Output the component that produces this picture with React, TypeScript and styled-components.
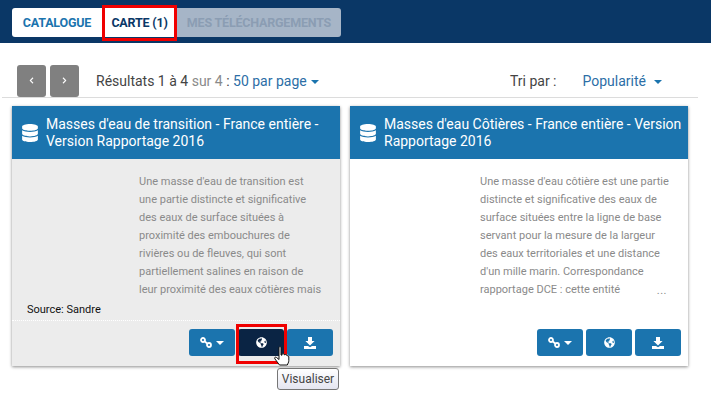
import React from 'react';
import styled, { createGlobalStyle } from 'styled-components';
import { FaDatabase, FaGlobeAmericas, FaChevronLeft, FaChevronRight } from 'react-icons/fa';

const GlobalStyle = createGlobalStyle`
    html, body {
        margin: 0;
        padding: 0;
        background: #fff;
        font-family: Roboto, "Liberation Sans", sans-serif;
    }
`;

const Page = styled.div`
    position: relative;
    width: 711px;
    height: 403px;
    overflow: hidden;
`;

const TopBar = styled.div`
    display: flex;
    align-items: flex-start;
    height: 43px;
    padding: 8px 0 0 12px;
    box-sizing: border-box;
    background: #0a3766;
`;

const Tab = styled.div<{ $state: 'active' | 'selected' | 'disabled'; $width: number; $first?: boolean; $last?: boolean }>`
    position: relative;
    width: ${p => p.$width}px;
    height: 29px;
    line-height: 29px;
    text-align: center;
    font-size: 12.5px;
    font-weight: 700;
    letter-spacing: -0.2px;
    background: ${p => (p.$state === 'disabled' ? '#a6b5c7' : '#fff')};
    color: ${p => (p.$state === 'active' ? '#1b74ae' : p.$state === 'selected' ? '#0a3766' : '#8b9db3')};
    border-radius: ${p => (p.$first ? '3px 0 0 3px' : p.$last ? '0 3px 3px 0' : '0')};
`;

const RedFrame = styled.div<{ $top: number; $left: number; $right: number; $bottom: number }>`
    position: absolute;
    top: ${p => p.$top}px;
    left: ${p => p.$left}px;
    right: ${p => p.$right}px;
    bottom: ${p => p.$bottom}px;
    border: 3px solid #f00000;
    pointer-events: none;
`;

const Toolbar = styled.div`
    display: flex;
    align-items: center;
    height: 33px;
    margin: 21px 13px 0 2px;
    padding: 0 0 0 15px;
    border-bottom: 1px solid #dcdcdc;
    font-size: 14px;
    color: #444;
`;

const PagerButton = styled.div`
    display: flex;
    align-items: center;
    justify-content: center;
    width: 29px;
    height: 32px;
    margin-right: 4px;
    border-radius: 3px;
    background: #808080;
    color: #fff;
    font-size: 7px;
`;

const Results = styled.div`
    margin-left: 13px;
    white-space: pre;
`;

const Muted = styled.span`
    color: #8a8a8a;
`;

const LinkText = styled.span`
    color: #2c6ea6;
`;

const Caret = styled.span<{ $gap: number }>`
    display: inline-block;
    margin-left: ${p => p.$gap}px;
    vertical-align: 2px;
    border-top: 4px solid #1b74ae;
    border-left: 4px solid transparent;
    border-right: 4px solid transparent;
`;

const SortLabel = styled.div`
    margin-left: auto;
`;

const SortValue = styled.div`
    margin: 0 36px 0 26px;
`;

const Cards = styled.div`
    display: flex;
    gap: 10px;
    margin: 8px 0 0 12px;
`;

const Card = styled.div<{ $hover?: boolean; $width: number }>`
    display: flex;
    flex-direction: column;
    width: ${p => p.$width}px;
    height: 260px;
    background: ${p => (p.$hover ? '#ececec' : '#fff')};
    box-shadow: 0 1px 3px rgba(0, 0, 0, 0.45);
`;

const CardHeader = styled.div`
    display: flex;
    align-items: center;
    height: 53px;
    padding-left: 9px;
    box-sizing: border-box;
    background: #1b74ae;
    color: #fff;
`;

const HeaderIcon = styled.div`
    display: flex;
    flex: none;
    width: 25px;
    font-size: 18px;
`;

const CardTitle = styled.div`
    font-size: 14px;
    line-height: 17px;
`;

const CardBody = styled.div<{ $indent: number }>`
    position: relative;
    height: 161px;
    padding: 14px 0 0 ${p => p.$indent}px;
    box-sizing: border-box;
    font-size: 11px;
    line-height: 18px;
    color: #8a8a8a;
`;

const BodyLine = styled.div`
    white-space: nowrap;
`;

const Ellipsis = styled.span`
    position: absolute;
    right: 21px;
    bottom: 20px;
    letter-spacing: 0.5px;
`;

const Source = styled.div`
    position: absolute;
    left: 15px;
    bottom: 2px;
    color: #111;
    font-size: 11px;
    line-height: 16px;
`;

const CardActions = styled.div<{ $dotted?: boolean }>`
    display: flex;
    justify-content: flex-end;
    gap: 3px;
    height: 46px;
    padding: 8px 7px 0 0;
    box-sizing: border-box;
    border-top: 1px dotted ${p => (p.$dotted ? '#fff' : 'transparent')};
`;

const ActionButton = styled.div<{ $dark?: boolean }>`
    position: relative;
    display: flex;
    align-items: center;
    justify-content: center;
    gap: 4px;
    width: 46px;
    height: 27px;
    border-radius: 3px;
    background: ${p => (p.$dark ? '#0a2444' : '#1b74ae')};
    color: #fff;
    font-size: 11px;
`;

const Tooltip = styled.div`
    position: absolute;
    left: 277px;
    top: 368px;
    width: 62px;
    height: 22px;
    line-height: 21px;
    box-sizing: border-box;
    text-align: center;
    border: 1px solid #767676;
    border-radius: 3px;
    background: linear-gradient(#fff, #e4e5f0);
    color: #444;
    font-size: 12px;
`;

const Pointer = styled.svg`
    position: absolute;
    left: 273px;
    top: 346px;
`;

const LinkIcon = () => (
    <svg width="12" height="11" viewBox="0 0 12 11" fill="none" stroke="#fff" strokeWidth="1.8">
        <circle cx="3" cy="3" r="2" />
        <circle cx="9" cy="8" r="2" />
        <path d="M4.5 4.2 L7.5 6.8" />
    </svg>
);

const DownloadIcon = () => (
    <svg width="12" height="12" viewBox="0 0 12 12" fill="#fff">
        <path d="M4 0h4v4h2.600L6 8.400 1.400 4H4z" />
        <path d="M0 9h4l2 1.300L8 9h4v3H0z" />
    </svg>
);

const ButtonCaret = styled.span`
    border-top: 4px solid #fff;
    border-left: 4px solid transparent;
    border-right: 4px solid transparent;
`;

const Actions = ({ dark }: { dark?: boolean }) => (
    <CardActions $dotted={dark}>
        <ActionButton>
            <LinkIcon />
            <ButtonCaret />
        </ActionButton>
        <ActionButton $dark={dark}>
            <FaGlobeAmericas />
        </ActionButton>
        <ActionButton>
            <DownloadIcon />
        </ActionButton>
    </CardActions>
);

const transitionLines = [
    "Une masse d'eau de transition est",
    'une partie distincte et significative',
    'des eaux de surface situées à',
    'proximité des embouchures de',
    'rivières ou de fleuves, qui sont',
    'partiellement salines en raison de',
    'leur proximité des eaux côtières mais',
];

const coastalLines = [
    "Une masse d'eau côtière est une partie",
    'distincte et significative des eaux de',
    'surface situées entre la ligne de base',
    'servant pour la mesure de la largeur',
    'des eaux territoriales et une distance',
    "d'un mille marin. Correspondance",
    'rapportage DCE : cette entité',
];

const App: React.FC = () => (
    <Page>
        <GlobalStyle />
        <TopBar>
            <Tab $state="active" $width={90} $first>CATALOGUE</Tab>
            <Tab $state="selected" $width={75}>
                CARTE (1)
                <RedFrame $top={-3} $left={0} $right={0} $bottom={-4} />
            </Tab>
            <Tab $state="disabled" $width={164} $last>MES TÉLÉCHARGEMENTS</Tab>
        </TopBar>
        <Toolbar>
            <PagerButton><FaChevronLeft /></PagerButton>
            <PagerButton><FaChevronRight /></PagerButton>
            <Results>
                Résultats 1 à 4 <Muted>sur 4</Muted> : <LinkText>50 par page</LinkText>
                <Caret $gap={4} />
            </Results>
            <SortLabel>Tri par :</SortLabel>
            <SortValue>
                <LinkText>Popularité</LinkText>
                <Caret $gap={8} />
            </SortValue>
        </Toolbar>
        <Cards>
            <Card $hover $width={328}>
                <CardHeader>
                    <HeaderIcon><FaDatabase /></HeaderIcon>
                    <CardTitle>Masses d'eau de transition - France entière - Version Rapportage 2016</CardTitle>
                </CardHeader>
                <CardBody $indent={127}>
                    {transitionLines.map(line => <BodyLine key={line}>{line}</BodyLine>)}
                    <Source>Source: Sandre</Source>
                </CardBody>
                <Actions dark />
            </Card>
            <Card $width={338}>
                <CardHeader>
                    <HeaderIcon><FaDatabase /></HeaderIcon>
                    <CardTitle>Masses d'eau Côtières - France entière - Version Rapportage 2016</CardTitle>
                </CardHeader>
                <CardBody $indent={130}>
                    {coastalLines.map(line => <BodyLine key={line}>{line}</BodyLine>)}
                    <Ellipsis>...</Ellipsis>
                </CardBody>
                <Actions />
            </Card>
        </Cards>
        <RedFrame $top={324} $left={236} $right={424} $bottom={39} />
        <Pointer width="17" height="22" viewBox="0 0 17 22">
            <path
                d="M6 1.500c0-1 2-1 2 0V9l1 .2V8c1-.8 2-.5 2 .6l1 .2c.8-.6 1.800-.2 1.800.7l1 .3c.7 0 1 .6 1 1.200v3.500c0 2-1 3-1.500 4.500H6.500L2 13c-1-1.200.2-2.500 1.500-1.500L6 13.500z"
                fill="#fff"
                stroke="#111"
                strokeWidth="1"
            />
        </Pointer>
        <Tooltip>Visualiser</Tooltip>
    </Page>
);

export default App;
